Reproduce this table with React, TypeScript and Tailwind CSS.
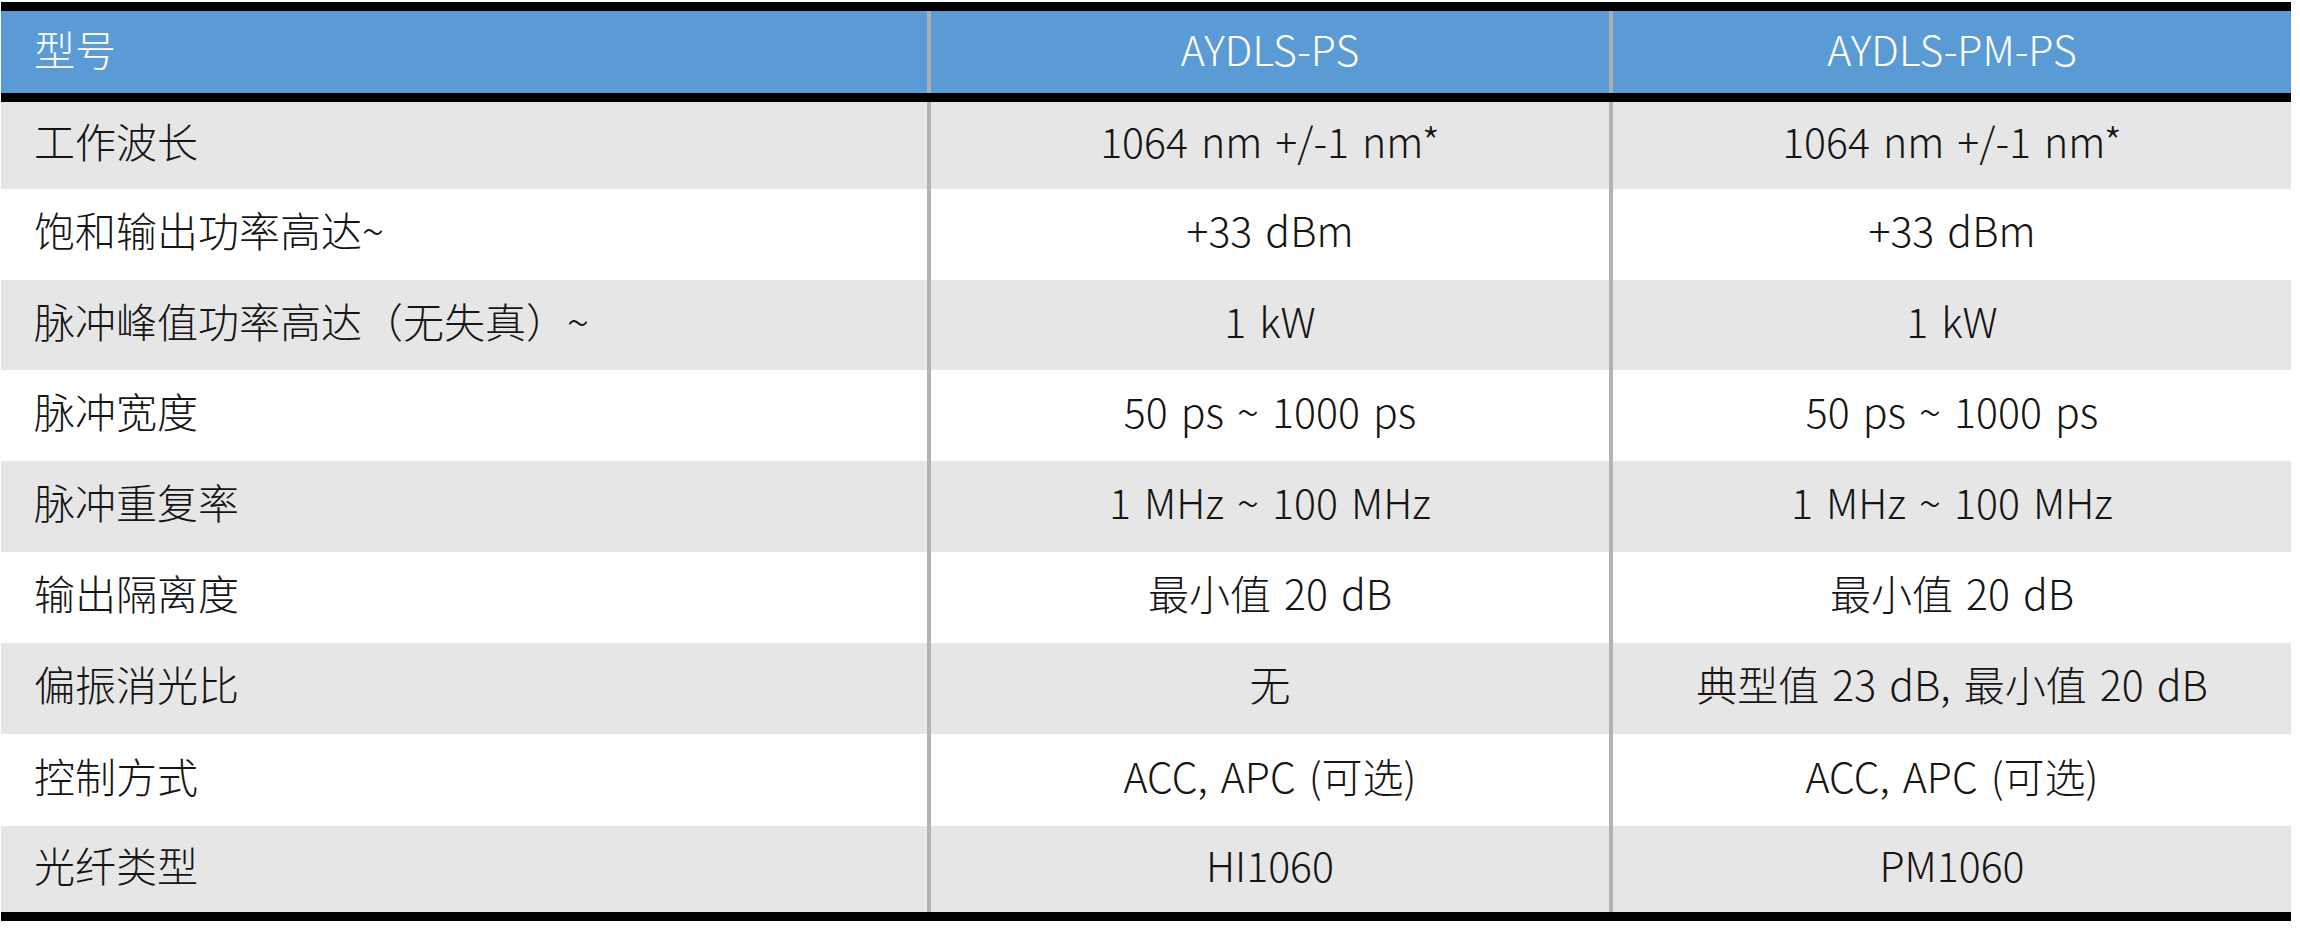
const rows: [string, string, string][] = [
  ['工作波长', '1064 nm +/-1 nm*', '1064 nm +/-1 nm*'],
  ['饱和输出功率高达~', '+33 dBm', '+33 dBm'],
  ['脉冲峰值功率高达（无失真）~', '1 kW', '1 kW'],
  ['脉冲宽度', '50 ps ~ 1000 ps', '50 ps ~ 1000 ps'],
  ['脉冲重复率', '1 MHz ~ 100 MHz', '1 MHz ~ 100 MHz'],
  ['输出隔离度', '最小值 20 dB', '最小值 20 dB'],
  ['偏振消光比', '无', '典型值 23 dB, 最小值 20 dB'],
  ['控制方式', 'ACC, APC (可选)', 'ACC, APC (可选)'],
  ['光纤类型', 'HI1060', 'PM1060'],
];

const heights = ['h-[87px]', 'h-[91px]', 'h-[90px]', 'h-[91px]', 'h-[91px]', 'h-[91px]', 'h-[91px]', 'h-[92px]', 'h-[86px]'];

export default function App() {
  return (
    <div
      className="min-h-screen bg-white pt-[2px] pl-[1px] text-[41px] font-light text-[#151515]"
      style={{ fontFamily: '"Noto Sans CJK SC", "Noto Sans", sans-serif' }}
    >
      <div className="w-[2290px] border-b-[9px] border-black">
        <div className="flex h-[100px] border-y-[9px] border-black bg-[#5b9bd5] text-white [word-spacing:4px]">
          <div className="flex w-[926px] items-center pb-[6px] pl-[33px]">型号</div>
          <div className="flex w-[682px] items-center justify-center border-l-4 border-[#adadad] pb-[6px]">AYDLS-PS</div>
          <div className="flex w-[682px] items-center justify-center border-l-4 border-[#adadad] pb-[6px]">AYDLS-PM-PS</div>
        </div>

        {rows.map(([label, a, b], i) => (
          <div
            key={label}
            className={`flex ${heights[i]} ${i % 2 === 0 ? 'bg-[#e6e6e6]' : 'bg-white'}`}
          >
            <div className="flex w-[926px] items-center pb-[9px] pl-[33px] whitespace-nowrap">{label}</div>
            <div className="flex w-[682px] items-center justify-center border-l-4 border-[#b3b3b3] pb-[9px] whitespace-nowrap [word-spacing:4px]">{a}</div>
            <div className="flex w-[682px] items-center justify-center border-l-4 border-[#b3b3b3] pb-[9px] whitespace-nowrap [word-spacing:4px]">{b}</div>
          </div>
        ))}
      </div>
    </div>
  );
}
